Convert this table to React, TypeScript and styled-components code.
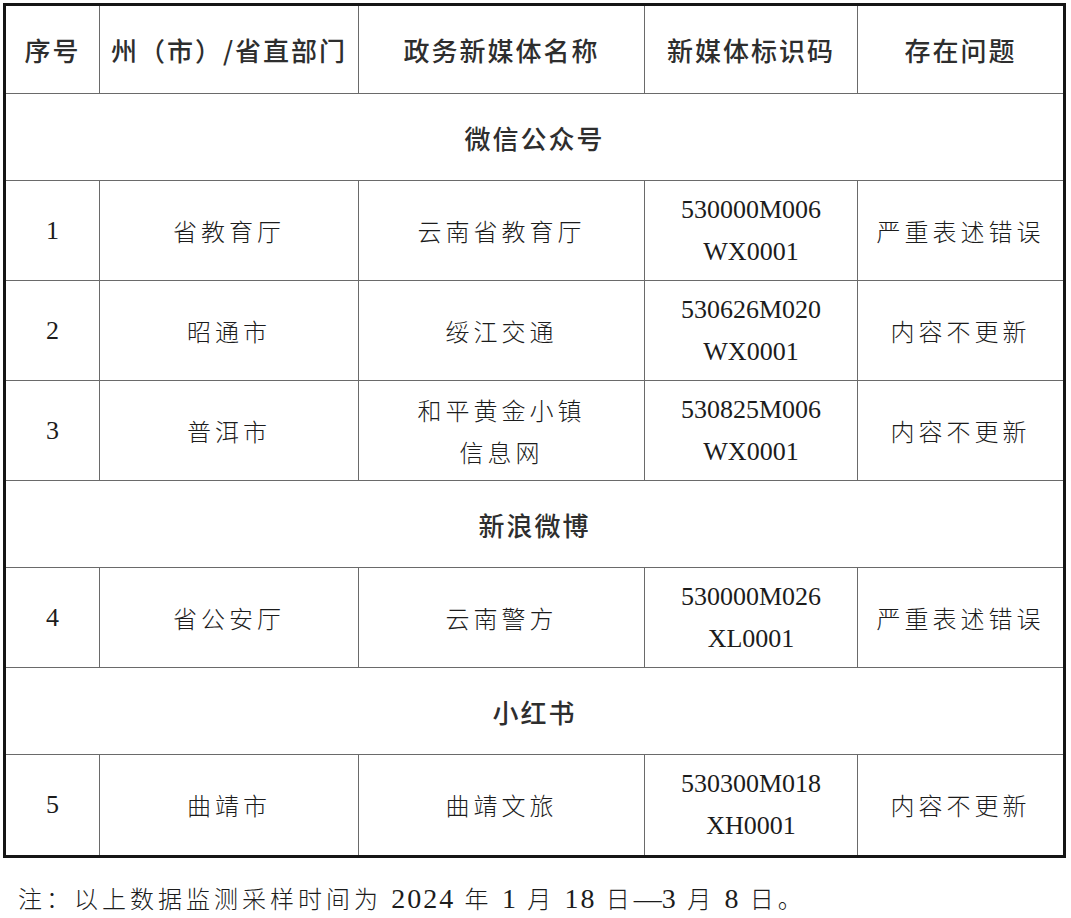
import React from "react";
import styled, { createGlobalStyle } from "styled-components";

const Global = createGlobalStyle`
  html, body { margin: 0; padding: 0; background: #ffffff; }
  body { font-family: "Noto Sans CJK SC", "Noto Sans", sans-serif; color: #222; }
`;

const Page = styled.div`
  width: 1071px;
  height: 918px;
  box-sizing: border-box;
  padding: 3px 0 0 3px;
  background: #fff;
`;

const Table = styled.table`
  width: 1060px;
  table-layout: fixed;
  border-collapse: collapse;
  border: 3px solid #151515;
`;

const HeadCell = styled.th`
  height: 87px;
  padding: 0;
  border: 1px solid #6a6a6a;
  font-family: "Noto Sans CJK SC", sans-serif;
  font-weight: 500;
  font-size: 26px;
  letter-spacing: 2px;
  color: #2e2e2e;
  text-align: center;
  vertical-align: middle;
`;

const SectionCell = styled.td`
  height: 86px;
  padding: 0;
  border: 1px solid #6a6a6a;
  font-family: "Noto Sans CJK SC", sans-serif;
  font-weight: 500;
  font-size: 26px;
  letter-spacing: 2px;
  color: #2e2e2e;
  text-align: center;
  vertical-align: middle;
`;

const Cell = styled.td<{ $serif?: boolean; $tall?: boolean }>`
  height: ${(p) => (p.$tall ? "100px" : "99px")};
  padding: 0;
  border: 1px solid #6a6a6a;
  text-align: center;
  vertical-align: middle;
  color: #1c1c1c;
  font-family: ${(p) =>
    p.$serif
      ? '"Liberation Serif", "Noto Sans CJK SC", serif'
      : '"Noto Sans CJK SC", sans-serif'};
  font-size: ${(p) => (p.$serif ? "26px" : "24px")};
  font-weight: ${(p) => (p.$serif ? 400 : 300)};
  letter-spacing: ${(p) => (p.$serif ? "0" : "4px")};
  line-height: 42px;
`;

const Line = styled.div`
  display: block;
`;

const Note = styled.p`
  margin: 22px 0 0 15px;
  font-family: "Noto Sans CJK SC", sans-serif;
  font-weight: 300;
  font-size: 24px;
  letter-spacing: 4px;
  line-height: 36px;
  color: #1c1c1c;
`;

const Num = styled.span`
  font-family: "Liberation Serif", serif;
  font-size: 28px;
  letter-spacing: 2px;
`;

const Dash = styled.span`
  font-family: "Liberation Serif", serif;
  font-size: 28px;
  letter-spacing: 0;
`;

type Row = { no: string; region: string; name: string[]; code: string[]; issue: string };
type Section = { title: string; rows: Row[] };

const sections: Section[] = [
  {
    title: "微信公众号",
    rows: [
      { no: "1", region: "省教育厅", name: ["云南省教育厅"], code: ["530000M006", "WX0001"], issue: "严重表述错误" },
      { no: "2", region: "昭通市", name: ["绥江交通"], code: ["530626M020", "WX0001"], issue: "内容不更新" },
      { no: "3", region: "普洱市", name: ["和平黄金小镇", "信息网"], code: ["530825M006", "WX0001"], issue: "内容不更新" },
    ],
  },
  {
    title: "新浪微博",
    rows: [
      { no: "4", region: "省公安厅", name: ["云南警方"], code: ["530000M026", "XL0001"], issue: "严重表述错误" },
    ],
  },
  {
    title: "小红书",
    rows: [
      { no: "5", region: "曲靖市", name: ["曲靖文旅"], code: ["530300M018", "XH0001"], issue: "内容不更新" },
    ],
  },
];

export default function App() {
  return (
    <Page>
      <Global />
      <Table>
        <colgroup>
          <col style={{ width: 95 }} />
          <col style={{ width: 259 }} />
          <col style={{ width: 286 }} />
          <col style={{ width: 213 }} />
          <col style={{ width: 207 }} />
        </colgroup>
        <thead>
          <tr>
            <HeadCell>序号</HeadCell>
            <HeadCell>州（市）/省直部门</HeadCell>
            <HeadCell>政务新媒体名称</HeadCell>
            <HeadCell>新媒体标识码</HeadCell>
            <HeadCell>存在问题</HeadCell>
          </tr>
        </thead>
        <tbody>
          {sections.map((s, si) => (
            <React.Fragment key={s.title}>
              <tr>
                <SectionCell colSpan={5}>{s.title}</SectionCell>
              </tr>
              {s.rows.map((r) => {
                const tall = si === sections.length - 1;
                return (
                  <tr key={r.no}>
                    <Cell $serif $tall={tall}>{r.no}</Cell>
                    <Cell $tall={tall}>{r.region}</Cell>
                    <Cell $tall={tall}>
                      {r.name.map((n) => (
                        <Line key={n}>{n}</Line>
                      ))}
                    </Cell>
                    <Cell $serif $tall={tall}>
                      {r.code.map((c) => (
                        <Line key={c}>{c}</Line>
                      ))}
                    </Cell>
                    <Cell $tall={tall}>{r.issue}</Cell>
                  </tr>
                );
              })}
            </React.Fragment>
          ))}
        </tbody>
      </Table>
      <Note>
        注：以上数据监测采样时间为 <Num>2024</Num> 年 <Num>1</Num> 月 <Num>18</Num> 日<Dash>—</Dash><Num>3</Num> 月 <Num>8</Num> 日。
      </Note>
    </Page>
  );
}
